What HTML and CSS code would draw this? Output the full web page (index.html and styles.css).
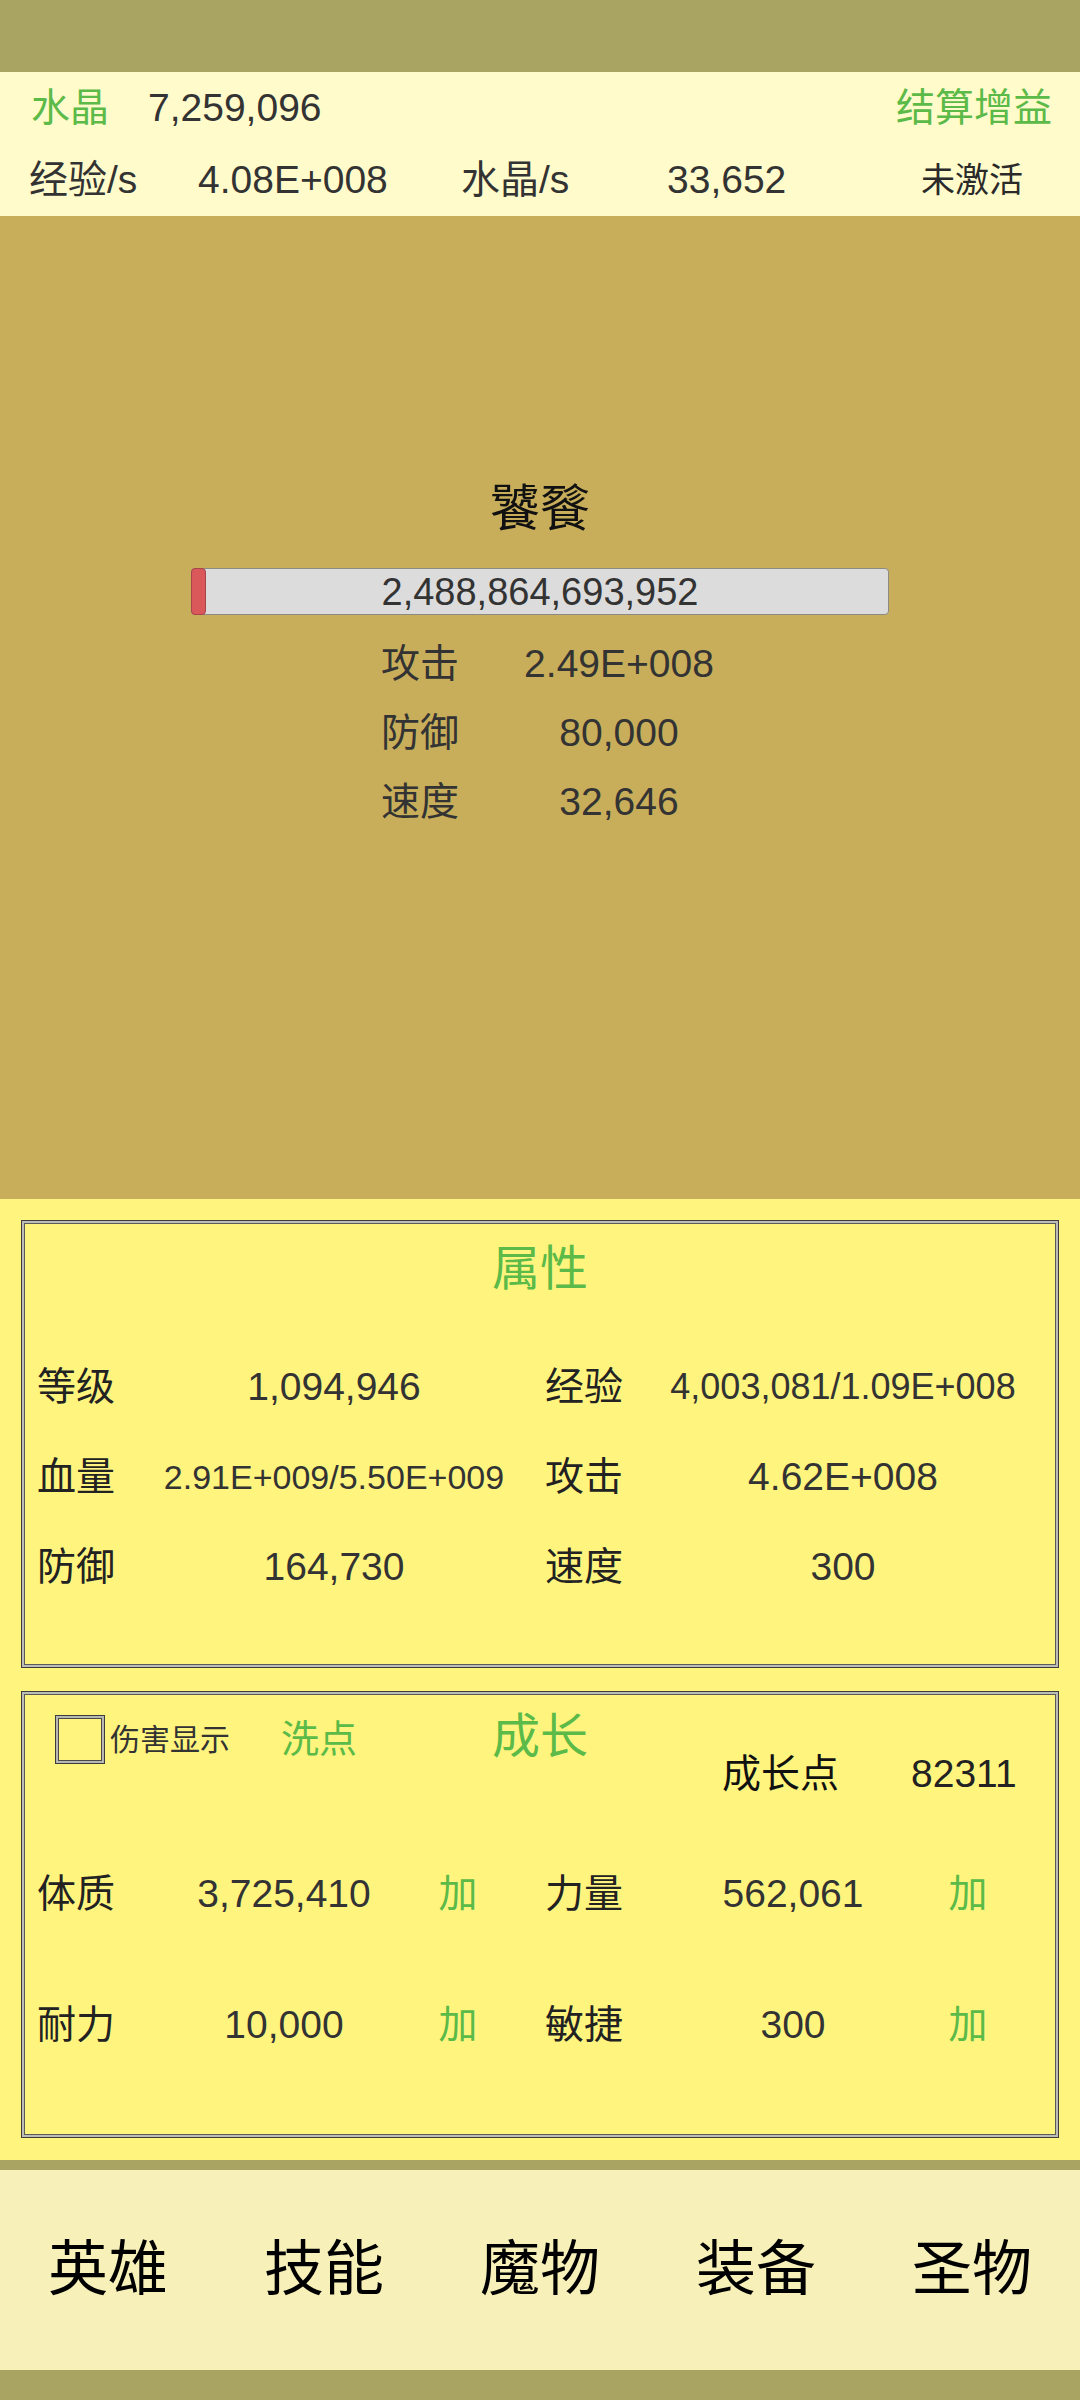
FILE: index.html
```html
<!DOCTYPE html>
<html>
<head>
  <meta charset="utf-8">
  <title>英雄</title>
  <link rel="stylesheet" href="styles.css">
</head>
<body>
  <div class="statusbar"></div>

  <div class="header">
    <div class="head-row">
      <span class="green">水晶</span>
      <span class="crystal">7,259,096</span>
      <span class="green settle">结算增益</span>
    </div>
    <div class="head-row rates">
      <span>经验/s</span>
      <span>4.08E+008</span>
      <span>水晶/s</span>
      <span>33,652</span>
      <span class="inactive">未激活</span>
    </div>
  </div>

  <div class="battle">
    <div class="monster-name">饕餮</div>
    <div class="hpbar">
      <div class="hpfill"></div>
      <span class="hptext">2,488,864,693,952</span>
    </div>
    <div class="monster-stats">
      <span>攻击</span><span class="val">2.49E+008</span>
      <span>防御</span><span class="val">80,000</span>
      <span>速度</span><span class="val">32,646</span>
    </div>
  </div>

  <div class="panels">
    <div class="box attr">
      <div class="box-title">属性</div>
      <div class="attr-grid">
        <span>等级</span><span class="val">1,094,946</span><span></span>
        <span>经验</span><span class="val small">4,003,081/1.09E+008</span>
        <span>血量</span><span class="val smaller">2.91E+009/5.50E+009</span><span></span>
        <span>攻击</span><span class="val">4.62E+008</span>
        <span>防御</span><span class="val">164,730</span><span></span>
        <span>速度</span><span class="val">300</span>
      </div>
    </div>

    <div class="box growth">
      <div class="growth-head">
        <div class="checkbox"></div>
        <span class="dmg">伤害显示</span>
        <span class="green reset">洗点</span>
        <span class="green growth-title">成长</span>
        <span class="points-label">成长点</span>
        <span class="points">82311</span>
      </div>
      <div class="growth-grid">
        <span>体质</span><span class="val">3,725,410</span><span class="green add">加</span><span></span>
        <span>力量</span><span class="val">562,061</span><span class="green add">加</span>
        <span>耐力</span><span class="val">10,000</span><span class="green add">加</span><span></span>
        <span>敏捷</span><span class="val">300</span><span class="green add">加</span>
      </div>
    </div>
  </div>

  <div class="divider"></div>
  <div class="nav">
    <span>英雄</span>
    <span>技能</span>
    <span>魔物</span>
    <span>装备</span>
    <span>圣物</span>
  </div>
  <div class="bottombar"></div>
</body>
</html>
```

FILE: styles.css
```css
body {
  margin: 0;
  width: 1080px;
  height: 2400px;
  font-family: "Liberation Sans", "Noto Sans CJK SC", sans-serif;
  font-size: 39px;
  color: #333;
  overflow: hidden;
}
.green { color: #5bba48; }

.statusbar { height: 72px; background: #a9a462; }
.bottombar { height: 30px; background: #a9a462; }
.divider { height: 10px; background: #a9a462; }

.header { height: 144px; background: #fffbcb; }
.head-row {
  display: flex;
  height: 72px;
  line-height: 72px;
  padding: 0 28px 0 31px;
}
.crystal { margin-left: 39px; }
.settle { margin-left: auto; }
.rates {
  display: grid;
  grid-template-columns: 169px 263px 206px 197px 216px;
  padding: 0 0 0 29px;
}
.inactive { text-align: center; font-size: 34px; color: #2a2a2a; }

.battle {
  height: 983px;
  background: #c8ae5a;
  padding-top: 263px;
  box-sizing: border-box;
}
.monster-name {
  text-align: center;
  font-size: 50px;
  line-height: 60px;
  color: #111;
}
.hpbar {
  position: relative;
  margin: 29px 0 0 191px;
  width: 698px;
  height: 47px;
  box-sizing: border-box;
  background: #dcdcdc;
  border: 1px solid #8b8b84;
  border-radius: 4px;
  text-align: center;
  line-height: 46px;
  font-size: 38px;
}
.hpfill {
  position: absolute;
  left: -1px;
  top: -1px;
  width: 15px;
  height: 47px;
  box-sizing: border-box;
  background: #da575a;
  border: 1px solid #a8454a;
  border-radius: 4px;
}
.monster-stats {
  display: grid;
  grid-template-columns: 100px 276px;
  grid-auto-rows: 69px;
  line-height: 69px;
  margin: 14px 0 0 381px;
}
.monster-stats .val { text-align: center; }

.panels {
  height: 961px;
  background: #fff57e;
  padding: 21px 21px 0;
  box-sizing: border-box;
}
.box {
  height: 448px;
  box-sizing: border-box;
  border: 1px solid #3c3c3c;
  box-shadow: inset 0 0 0 2px #bdbdb8, inset 0 0 0 3px #5a5a58;
  padding: 3px;
  color: #222;
}
.growth { margin-top: 23px; height: 447px; }
.box-title {
  text-align: center;
  font-size: 48px;
  line-height: 60px;
  margin-top: 15px;
  color: #5bba48;
}
.attr-grid {
  display: grid;
  grid-template-columns: 100px 394px 14px 100px 396px;
  grid-auto-rows: 90px;
  line-height: 90px;
  margin-top: 43px;
  padding-left: 12px;
}
.val { text-align: center; color: #333; }
.small { font-size: 36px; }
.smaller { font-size: 34px; }

.growth-head {
  display: flex;
  align-items: flex-start;
  height: 113px;
  padding: 20px 0 0 30px;
  line-height: 49px;
}
.checkbox {
  width: 50px;
  height: 49px;
  box-sizing: border-box;
  border: 1px solid #3c3c3c;
  box-shadow: inset 0 0 0 2px #b8b8b2, inset 0 0 0 3px #4a4a48;
}
.dmg { font-size: 30px; margin-left: 5px; color: #333; }
.reset { font-size: 38px; margin-left: 51px; }
.growth-title { font-size: 48px; margin-left: 135px; line-height: 44px; }
.points-label { margin-left: 134px; margin-top: 34px; color: #111; }
.points { margin-left: 72px; margin-top: 34px; }
.growth-grid {
  display: grid;
  grid-template-columns: 100px 294px 54px 60px 100px 296px 54px;
  grid-auto-rows: 131px;
  line-height: 131px;
  padding-left: 12px;
}
.add { text-align: center; }

.nav {
  display: grid;
  grid-template-columns: repeat(5, 1fr);
  height: 200px;
  line-height: 200px;
  background: #f7f0b8;
  text-align: center;
  font-size: 60px;
  color: #000;
}
```
